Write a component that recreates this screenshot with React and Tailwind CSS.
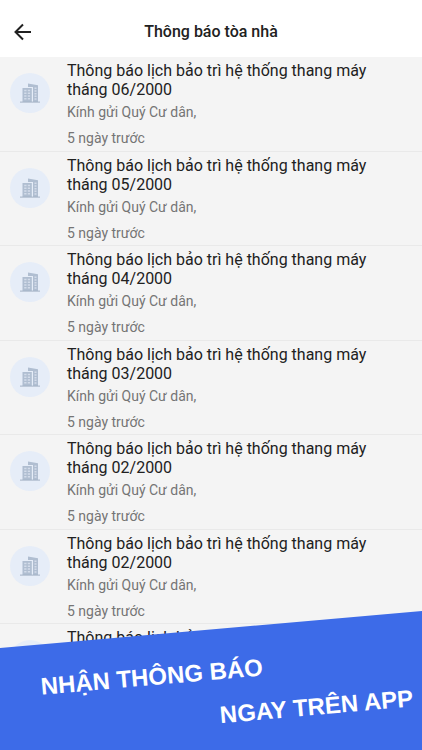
import React from 'react';

const notifications = [
  { id: 1, month: '06/2000' },
  { id: 2, month: '05/2000' },
  { id: 3, month: '04/2000' },
  { id: 4, month: '03/2000' },
  { id: 5, month: '02/2000' },
  { id: 6, month: '02/2000' },
  { id: 7, month: '01/2000' },
];

function BuildingIcon() {
  return (
    <svg className="w-5 h-5" viewBox="0 0 20 20" fill="none" aria-hidden="true">
      <path d="M2.500 5h9.300v14H2.500zM8 .500l10 1.800V19h-5V4H8z" fill="#b0bed1" />
      <path d="M0 18.600h20v1H0z" fill="#a3b1c5" />
      <path
        d="M4.200 6.800h2.300v1.500H4.200zM7.800 6.800h2.300v1.500H7.800zM4.200 9.500h2.300V11H4.200zM7.800 9.500h2.300V11H7.800zM4.200 12.200h2.300v1.500H4.200zM7.800 12.200h2.300v1.500H7.800zM4.200 14.900h2.300v1.500H4.200zM7.800 14.900h2.300v1.500H7.800zM14.500 4.500h2V6h-2zM14.500 7.200h2v1.500h-2zM14.500 9.900h2v1.500h-2zM14.500 12.600h2v1.500h-2zM14.500 15.300h2v1.500h-2z"
        fill="#d3dcea"
      />
    </svg>
  );
}

function NotificationItem({ notification }) {
  return (
    <li className="flex items-start gap-[17px] px-[10px] pt-1 pb-0.5 odd:pb-[3px] border-b border-[#e9e9e9]">
      <div className="mt-3 flex h-10 w-10 shrink-0 items-center justify-center rounded-full bg-[#e6edf8]">
        <BuildingIcon />
      </div>
      <div className="min-w-0 flex-1 pr-6">
        <h2 className="text-base leading-[19px] text-[#212121]">
          Thông báo lịch bảo trì hệ thống thang máy tháng {notification.month}
        </h2>
        <p className="mt-[3px] text-sm leading-5 text-[#757575]">Kính gửi Quý Cư dân,</p>
        <p className="mt-1.5 text-sm leading-5 text-[#757575]">5 ngày trước</p>
      </div>
    </li>
  );
}

export default function App() {
  return (
    <div className="relative h-screen overflow-hidden bg-[#f4f4f4] font-['Roboto',sans-serif]">
      <header className="grid h-[57px] grid-cols-[46px_1fr_46px] items-center bg-white pt-1.5 text-[#212121]">
        <button type="button" aria-label="Quay lại" className="flex justify-center">
          <svg className="w-6 h-6" viewBox="0 0 24 24" fill="none" stroke="currentColor" strokeWidth={2}>
            <path d="M20 12H5M12 4.500L4.500 12l7.500 7.500" />
          </svg>
        </button>
        <h1 className="text-center text-base leading-6 font-medium">Thông báo tòa nhà</h1>
      </header>

      <ul>
        {notifications.map((notification) => (
          <NotificationItem key={notification.id} notification={notification} />
        ))}
      </ul>

      <div className="absolute inset-x-0 bottom-0 h-[139px] bg-[#3d6be8] [clip-path:polygon(0_37px,100%_0,100%_100%,0_100%)]">
        <div className="origin-top-left -rotate-5 pt-[57px] pl-[34px] font-['Liberation_Sans',sans-serif] text-2xl leading-[44px] font-bold whitespace-nowrap text-white">
          <p>NHẬN THÔNG BÁO</p>
          <p className="pl-44">NGAY TRÊN APP</p>
        </div>
      </div>
    </div>
  );
}
